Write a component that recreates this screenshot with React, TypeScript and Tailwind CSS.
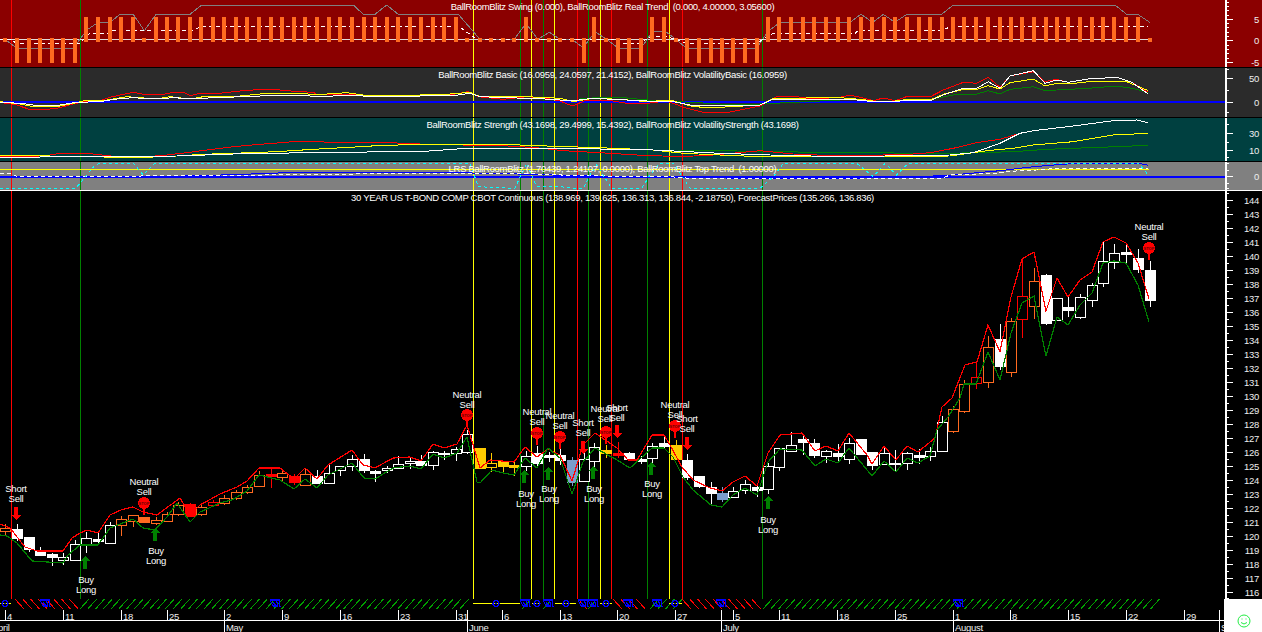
import type { ReactNode } from 'react';

// helpers: chart data was read off 3x crops, so z() takes crop coords + crop origin
const z = (ox: number, oy: number, ...v: number[]) => {
  const out: string[] = [];
  for (let i = 0; i < v.length; i += 2) out.push(`${(v[i] / 3 + ox).toFixed(1)},${(v[i + 1] / 3 + oy).toFixed(1)}`);
  return out.join(' ');
};
const join = (...parts: string[]) => parts.join(' ');

const RED = '#ff0000';
const GREEN = '#008000';
const YELLOW = '#ffff00';
const BLUE = '#0000ff';
const ORANGE = '#ff6a20';
const CYAN = '#00ffff';

const VERTICALS: [number, string][] = [
  [11, RED],
  [80, GREEN],
  [473, YELLOW],
  [520, GREEN],
  [531, YELLOW],
  [543, GREEN],
  [554, YELLOW],
  [577, RED],
  [588, GREEN],
  [600, YELLOW],
  [611, RED],
  [647, GREEN],
  [669, YELLOW],
  [682, RED],
  [762, GREEN],
];

type Candle = [number, number, number, number, number, string];

// x, wick top, body top, body bottom, wick bottom, kind
const CANDLES: Candle[] = [
  [5, 524, 528, 531, 535, 'n'],
  [17, 524, 529, 538, 541, 'W'],
  [29, 537, 537, 549, 552, 'W'],
  [40, 547, 551, 555, 556, 'W'],
  [52, 553, 554, 557, 566, 'W'],
  [63, 553, 557, 560, 565, 'o'],
  [75, 540, 544, 560, 560, 'o'],
  [86, 532, 538, 544, 553, 'o'],
  [98, 532, 539, 541, 544, 'W'],
  [110, 522, 525, 543, 543, 'o'],
  [121, 516, 519, 525, 536, 'n'],
  [133, 515, 515, 521, 527, 'n'],
  [144, 517, 517, 522, 523, 'N'],
  [156, 517, 520, 523, 525, 'n'],
  [167, 512, 514, 521, 521, 'n'],
  [178, 502, 505, 514, 516, 'n'],
  [190, 503, 504, 516, 517, 'R'],
  [201, 503, 507, 514, 516, 'n'],
  [213, 500, 502, 505, 507, 'r'],
  [224, 495, 498, 503, 505, 'n'],
  [236, 490, 492, 498, 500, 'n'],
  [247, 485, 487, 492, 494, 'n'],
  [259, 471, 475, 486, 486, 'n'],
  [271, 469, 474, 476, 488, 'R'],
  [282, 470, 473, 477, 481, 'n'],
  [294, 474, 476, 482, 485, 'R'],
  [305, 468, 474, 485, 486, 'n'],
  [317, 470, 476, 483, 483, 'W'],
  [329, 464, 473, 483, 483, 'o'],
  [340, 466, 466, 470, 476, 'o'],
  [352, 455, 459, 466, 471, 'o'],
  [364, 454, 459, 470, 473, 'W'],
  [375, 470, 471, 473, 482, 'W'],
  [387, 466, 468, 470, 473, 'o'],
  [398, 456, 464, 468, 468, 'o'],
  [410, 458, 461, 463, 469, 'o'],
  [421, 455, 461, 465, 465, 'W'],
  [433, 451, 452, 465, 470, 'o'],
  [444, 451, 453, 454, 460, 'o'],
  [456, 447, 449, 453, 461, 'o'],
  [467, 430, 434, 452, 454, 'o'],
  [480, 448, 448, 468, 468, 'Y'],
  [491, 453, 463, 467, 472, 'y'],
  [503, 461, 461, 466, 472, 'Y'],
  [514, 462, 465, 467, 476, 'Y'],
  [526, 451, 456, 466, 471, 'o'],
  [537, 446, 453, 463, 467, 'W'],
  [549, 452, 455, 457, 462, 'W'],
  [560, 449, 455, 460, 465, 'W'],
  [572, 457, 460, 482, 486, 'B'],
  [584, 451, 459, 481, 481, 'o'],
  [594, 443, 447, 461, 467, 'o'],
  [606, 445, 450, 453, 458, 'Y'],
  [618, 442, 453, 455, 458, 'R'],
  [629, 452, 453, 459, 460, 'W'],
  [641, 456, 459, 461, 464, 'W'],
  [652, 443, 446, 458, 465, 'o'],
  [664, 437, 443, 446, 448, 'W'],
  [676, 440, 445, 459, 460, 'Y'],
  [687, 454, 460, 477, 480, 'W'],
  [699, 476, 476, 486, 488, 'W'],
  [711, 482, 487, 493, 504, 'W'],
  [722, 487, 493, 499, 502, 'B'],
  [733, 487, 491, 497, 497, 'o'],
  [745, 480, 484, 490, 494, 'o'],
  [757, 483, 487, 490, 497, 'W'],
  [768, 463, 466, 489, 494, 'o'],
  [779, 448, 448, 467, 471, 'o'],
  [791, 432, 445, 451, 451, 'o'],
  [803, 435, 439, 442, 455, 'W'],
  [814, 439, 443, 455, 458, 'W'],
  [826, 450, 451, 456, 463, 'o'],
  [838, 444, 453, 456, 463, 'W'],
  [849, 438, 443, 459, 464, 'o'],
  [861, 439, 439, 454, 455, 'W'],
  [872, 452, 452, 465, 470, 'W'],
  [884, 446, 453, 464, 464, 'o'],
  [895, 450, 463, 464, 472, 'W'],
  [907, 452, 453, 463, 470, 'o'],
  [919, 449, 455, 457, 464, 'W'],
  [930, 447, 451, 456, 461, 'o'],
  [942, 416, 422, 451, 452, 'o'],
  [953, 406, 409, 431, 433, 'n'],
  [964, 380, 384, 411, 413, 'n'],
  [976, 363, 377, 383, 389, 'r'],
  [988, 336, 347, 382, 388, 'n'],
  [1000, 324, 339, 366, 370, 'W'],
  [1011, 318, 321, 372, 377, 'n'],
  [1022, 258, 296, 319, 338, 'r'],
  [1034, 268, 281, 306, 319, 'n'],
  [1046, 274, 275, 323, 325, 'W'],
  [1057, 298, 298, 320, 321, 'o'],
  [1068, 297, 307, 310, 317, 'W'],
  [1080, 294, 297, 317, 319, 'o'],
  [1092, 283, 285, 300, 307, 'o'],
  [1103, 242, 261, 283, 287, 'o'],
  [1114, 244, 253, 262, 269, 'o'],
  [1126, 245, 252, 254, 263, 'W'],
  [1138, 249, 258, 269, 273, 'W'],
  [1150, 261, 270, 300, 307, 'W'],
];

const KIND: Record<string, { color: string; filled: boolean }> = {
  W: { color: '#ffffff', filled: true },
  o: { color: '#ffffff', filled: false },
  N: { color: ORANGE, filled: true },
  n: { color: ORANGE, filled: false },
  R: { color: RED, filled: true },
  r: { color: RED, filled: false },
  Y: { color: '#ffcc00', filled: true },
  y: { color: '#ffcc00', filled: false },
  B: { color: '#7b9ccb', filled: true },
};

const redBand =
  '0,524 10,528 25,547 37,551 63,551 72,538 80,533 87,530 98,533 110,515 121,510 133,507 143,512 157,515 180,498 190,515 200,505 220,494 237,487 247,481 259,468 280,468 294,479 305,468 317,479 328,465 352,450 363,465 375,468 393,458 410,457 421,461 433,444 444,448 457,444 467,425 477,458 480,468 490,460 514,462 525,447 537,457 548,449 560,455 572,481 583,445 595,433 617,448 628,460 637,460 652,435 664,435 670,445 682,467 693,480 710,488 722,491 733,482 745,476 757,486 768,453 780,435 802,433 815,451 826,446 838,451 849,433 867,455 872,464 884,446 896,460 907,446 918,452 935,438 942,407 952,398 965,365 977,362 988,325 1000,352 1011,297 1022,259 1034,252 1046,311 1057,278 1068,297 1080,280 1092,272 1103,242 1114,237 1126,243 1138,263 1149,299';
const greenBand =
  '0,535 7,536 17,543 32,561 63,563 68,555 80,545 98,545 110,528 133,519 143,528 155,530 167,517 177,503 190,522 200,512 220,503 232,500 247,491 259,475 280,480 294,489 305,479 317,488 328,475 352,463 364,478 375,479 393,468 410,466 421,469 433,454 444,458 457,453 467,437 477,482 480,483 492,470 503,473 514,475 525,458 537,468 548,448 560,458 572,494 583,462 595,448 617,460 630,468 652,448 664,448 673,457 683,477 693,490 711,505 722,507 733,495 745,488 757,495 768,462 780,449 802,450 815,466 826,459 838,463 849,448 872,476 884,461 896,472 907,458 918,463 930,456 937,430 948,417 960,398 964,384 976,384 988,352 1000,380 1011,333 1022,303 1034,296 1046,356 1057,317 1068,325 1080,305 1092,293 1103,263 1114,261 1126,263 1138,285 1149,322';

const DOTS = [5, 144, 467, 480, 491, 503, 514, 537, 549, 560, 572, 606, 676, 1150];
const NEGATIVE = [17, 29, 40, 52, 63, 75, 584, 618, 629, 641, 687, 699, 711, 722, 733, 745, 757];

function Line({ p, c, dash, w = 1 }: { p: string; c: string; dash?: string; w?: number }) {
  return <polyline points={p} fill="none" stroke={c} strokeWidth={w} strokeDasharray={dash} />;
}

function Verticals({ y0, y1 }: { y0: number; y1: number }) {
  return (
    <>
      {VERTICALS.map(([x, c]) => (
        <line key={x} x1={x + 0.5} x2={x + 0.5} y1={y0} y2={y1} stroke={c} />
      ))}
    </>
  );
}

interface PaneProps {
  className: string;
  chartHeight: number;
  y0: number;
  title: string;
  ticks: [number, boolean][];
  labels: [string, number][];
  children: ReactNode;
}

function Pane({ className, chartHeight, y0, title, ticks, labels, children }: PaneProps) {
  return (
    <div className={`flex shrink-0 ${className}`}>
      <div className="relative w-[1225px] overflow-hidden">
        <svg
          className="absolute left-0 top-0"
          width={1225}
          height={chartHeight}
          viewBox={`0 ${y0} 1225 ${chartHeight}`}
          shapeRendering="crispEdges"
        >
          <Verticals y0={y0} y1={y0 + chartHeight} />
          {children}
        </svg>
        <div className="relative whitespace-pre pt-px text-center text-[9.5px] leading-3 tracking-[-0.31px] text-white">
          {title}
        </div>
      </div>
      <div className="relative w-[37px] overflow-hidden border-l-2 border-white">
        <svg
          className="absolute left-0 top-0"
          width={35}
          height={chartHeight}
          viewBox={`0 ${y0} 35 ${chartHeight}`}
          shapeRendering="crispEdges"
        >
          {ticks.map(([y, major]) => (
            <line key={y} x1={0} x2={major ? 6 : 2} y1={y + 0.5} y2={y + 0.5} stroke="#ffffff" />
          ))}
        </svg>
        {labels.map(([text, y]) => (
          <span
            key={text}
            className="absolute right-[3px] text-[9.5px] leading-3 tracking-[-0.3px] text-[#eeeeee]"
            style={{ top: y - y0 - 5 }}
          >
            {text}
          </span>
        ))}
      </div>
    </div>
  );
}

function SwingBars() {
  return (
    <>
      {CANDLES.map(([x]) => {
        if (DOTS.includes(x)) return <rect key={x} x={x - 2} y={38} width={4} height={4} rx={1} fill={ORANGE} />;
        if (NEGATIVE.includes(x)) return <rect key={x} x={x - 2} y={38} width={4} height={25} rx={1} fill={ORANGE} />;
        return <rect key={x} x={x - 2} y={17} width={4} height={25} rx={1} fill={ORANGE} />;
      })}
    </>
  );
}

function CandleMark({ c }: { c: Candle }) {
  const [x, wt, bt, bb, wb, kind] = c;
  const { color, filled } = KIND[kind];
  return (
    <g>
      <line x1={x + 0.5} x2={x + 0.5} y1={wt} y2={wb} stroke={color} />
      <rect
        x={x - 4.5}
        y={bt + 0.5}
        width={10}
        height={Math.max(bb - bt, 1)}
        fill={filled ? color : '#000000'}
        stroke={color}
        strokeWidth={1.2}
      />
    </g>
  );
}

function Label({ x, y, a, b }: { x: number; y: number; a: string; b: string }) {
  return (
    <g className="fill-white text-[9.5px] tracking-[-0.25px]" textAnchor="middle" shapeRendering="auto">
      <text x={x} y={y + 3.5}>
        {a}
      </text>
      <text x={x} y={y + 14}>
        {b}
      </text>
    </g>
  );
}

function ShortSell({ x, y, ay }: { x: number; y: number; ay: number }) {
  return (
    <>
      <Label x={x} y={y} a="Short" b="Sell" />
      <polygon
        points={`${x - 2},${ay} ${x + 2},${ay} ${x + 2},${ay + 8} ${x + 5},${ay + 8} ${x},${ay + 13} ${x - 5},${ay + 8} ${x - 2},${ay + 8}`}
        fill={RED}
      />
    </>
  );
}

function BuyLong({ x, y, ax, ay }: { x: number; y: number; ax: number; ay: number }) {
  return (
    <>
      <Label x={x} y={y} a="Buy" b="Long" />
      <polygon
        points={`${ax},${ay} ${ax + 5},${ay + 5} ${ax + 2},${ay + 5} ${ax + 2},${ay + 13} ${ax - 2},${ay + 13} ${ax - 2},${ay + 5} ${ax - 5},${ay + 5}`}
        fill={GREEN}
      />
    </>
  );
}

function NeutralSell({ x, y, sx, sy }: { x: number; y: number; sx: number; sy: number }) {
  return (
    <>
      <Label x={x} y={y} a="Neutral" b="Sell" />
      <rect x={sx - 1} y={sy + 4} width={2} height={8} fill={RED} />
      <circle cx={sx} cy={sy} r={6} fill={RED} />
      <text x={sx} y={sy + 1.5} textAnchor="middle" className="fill-[#660000] text-[4px] font-bold" shapeRendering="auto">
        STOP
      </text>
    </>
  );
}

const priceTicks: [number, boolean][] = [];
const priceLabels: [string, number][] = [];
for (let p = 144; p >= 116; p--) {
  const y = 200 + (144 - p) * 14;
  priceTicks.push([y, true]);
  priceTicks.push([y - 7, false]);
  priceLabels.push([String(p), y]);
}
priceTicks.push([599 - 1, false]);

const swingTicks: [number, boolean][] = [
  [2, false], [6, false], [10, false], [15, false], [19, true], [23, false], [27, false], [32, false], [36, false], [40, true],
  [45, false], [49, false], [53, false], [58, false], [62, true],
];

const DATES: [string, number][] = [
  ['4', 5], ['11', 63], ['18', 121], ['25', 167], ['2', 224], ['9', 282], ['16', 340], ['23', 398], ['31', 456],
  ['6', 502], ['13', 560], ['20', 617], ['27', 675], ['5', 733], ['11', 779], ['18', 837], ['25', 895], ['1', 953],
  ['8', 1010], ['15', 1068], ['22', 1126], ['29', 1184],
];
const MONTHS: [string, number][] = [
  ['April', -10], ['May', 224], ['June', 467], ['July', 721], ['August', 953], ['Sep', 1219],
];

function hatch(x1: number, x2: number, color: string, back: boolean) {
  const out: ReactNode[] = [];
  for (let x = x1; x < x2 - 6; x += 7.75) {
    out.push(
      <line
        key={`${color}${x}`}
        x1={x}
        x2={x + 9}
        y1={back ? 0 : 10}
        y2={back ? 10 : 0}
        stroke={color}
      />,
    );
  }
  return out;
}

function Dot({ x }: { x: number }) {
  return (
    <g>
      <circle cx={x} cy={4.5} r={3} fill="none" stroke={BLUE} strokeWidth={1.3} />
      <rect x={x - 1} y={4} width={2} height={1} fill={BLUE} />
    </g>
  );
}

function Glyph({ x }: { x: number }) {
  return (
    <path
      d={`M${x - 5} 1 H${x + 4} L${x + 5} 8 M${x - 5} 1 L${x - 2} 7 H${x + 3} M${x - 2} 3 L${x + 1} 7 M${x + 1} 1 L${x + 3} 6`}
      fill="none"
      stroke={BLUE}
      strokeWidth={1.2}
    />
  );
}

export default function App() {
  return (
    <div className="flex h-[632px] w-[1262px] flex-col overflow-hidden bg-black font-['Liberation_Sans',Arial,sans-serif]">
      {/* swing */}
      <Pane
        className="h-[68px] border-b border-black bg-[#8b0000]"
        chartHeight={67}
        y0={0}
        title="BallRoomBlitz Swing (0.000), BallRoomBlitz Real Trend  (0.000, 4.00000, 3.05600)"
        ticks={swingTicks}
        labels={[['5', 19], ['0', 40], ['-5', 62]]}
      >
        <Line p="0,39.5 1150,39.5" c="#dddddd" />
        <Line
          p={join(
            z(0, 0, 15, 118, 50, 145, 220, 145, 260, 90, 295, 67, 330, 67, 360, 43, 400, 43, 433, 92, 468, 43, 570, 43, 605, 15, 1060, 15, 1090, 43, 1125, 43, 1160, 15, 1195, 43, 1260, 43),
            z(420, 0, 115, 43, 180, 118, 283, 118, 318, 70, 353, 118, 388, 97, 420, 118, 455, 118, 490, 143, 525, 95, 560, 118, 595, 145, 663, 145, 697, 95, 737, 95, 767, 118, 800, 145, 1010, 145, 1043, 95, 1080, 67, 1260, 67),
            z(840, 0, 30, 67, 63, 43, 98, 67, 130, 43, 165, 67, 200, 43, 305, 43, 340, 15, 825, 15, 860, 43, 893, 43, 929, 67),
          )}
          c="#808080"
        />
        <Line
          p={join(
            z(0, 0, 0, 118, 30, 118, 50, 130, 240, 130, 270, 100, 330, 100, 335, 92, 580, 92, 600, 80, 1260, 78),
            z(420, 0, 115, 78, 170, 118, 580, 118, 590, 130, 660, 130, 695, 108, 735, 108, 765, 118, 800, 130, 1010, 130, 1060, 100, 1260, 100),
            z(840, 0, 45, 100, 55, 92, 305, 92, 335, 78, 925, 78),
          )}
          c="#ffffff"
          dash="4 3"
        />
        <SwingBars />
      </Pane>

      {/* basic */}
      <Pane
        className="h-[50px] border-b border-black bg-[#2b2b2b]"
        chartHeight={49}
        y0={68}
        title="BallRoomBlitz Basic (16.0959, 24.0597, 21.4152), BallRoomBlitz VolatilityBasic (16.0959)"
        ticks={[[69, false], [78, true], [90, false], [102, true], [112, false]]}
        labels={[['50', 78], ['0', 102]]}
      >
        <Line p="0,102 1225,102" c={BLUE} w={2} />
        <Line
          p={join(
            z(420, 0, 480, 295, 600, 292, 680, 300, 780, 305, 900, 312, 1020, 312),
            z(840, 0, 0, 300, 30, 295, 100, 305, 165, 303, 205, 298, 275, 298, 340, 285, 370, 282, 410, 282, 445, 272, 480, 282, 510, 268, 580, 260, 615, 272, 650, 270, 745, 265, 830, 258, 875, 265, 925, 277),
          )}
          c={GREEN}
        />
        <Line
          p={join(
            z(0, 0, 0, 307, 50, 315, 85, 327, 120, 330, 170, 325, 220, 312, 250, 305, 290, 305, 330, 292, 370, 283, 400, 277, 430, 283, 490, 283, 520, 277, 550, 277, 570, 287, 600, 280, 660, 280, 710, 274, 760, 270, 810, 267, 860, 272, 900, 275, 940, 277, 950, 283, 1000, 285, 1060, 282, 1100, 287, 1260, 287),
            z(420, 0, 100, 283, 145, 275, 175, 290, 250, 298, 320, 290, 380, 295, 420, 303, 457, 318, 500, 300, 560, 300, 620, 310, 665, 312, 740, 303, 800, 325, 850, 337, 920, 338, 1020, 318, 1070, 290, 1130, 290, 1180, 297, 1260, 292),
            z(840, 0, 30, 285, 60, 292, 100, 302, 130, 294, 165, 302, 205, 288, 275, 288, 310, 270, 370, 247, 410, 250, 445, 232, 480, 262, 510, 228, 580, 215, 615, 245, 650, 238, 685, 247, 745, 237, 830, 232, 875, 247, 925, 277),
          )}
          c={RED}
        />
        <Line
          p={join(
            z(0, 0, 0, 305, 60, 312, 100, 320, 170, 320, 220, 310, 250, 303, 320, 300, 380, 290, 420, 293, 470, 297, 510, 290, 570, 297, 610, 290, 700, 290, 780, 282, 900, 280, 950, 284, 1040, 278, 1090, 285, 1260, 285),
            z(420, 0, 80, 283, 150, 277, 180, 290, 320, 290, 420, 295, 460, 305, 520, 295, 600, 298, 680, 305, 750, 300, 820, 320, 880, 323, 1020, 315, 1060, 295, 1260, 293),
            z(840, 0, 60, 298, 100, 303, 165, 303, 205, 298, 275, 298, 310, 283, 370, 268, 410, 268, 445, 257, 480, 267, 510, 248, 580, 237, 615, 258, 650, 250, 685, 252, 745, 245, 860, 245, 925, 272),
          )}
          c={YELLOW}
        />
        <Line
          p={join(
            z(0, 0, 0, 307, 60, 310, 100, 315, 180, 315, 230, 307, 300, 305, 350, 297, 400, 293, 460, 297, 520, 293, 570, 296, 680, 292, 780, 288, 900, 287, 930, 288, 1000, 288, 1060, 285, 1090, 288, 1260, 288),
            z(420, 0, 100, 287, 150, 280, 180, 290, 400, 298, 450, 303, 520, 295, 680, 303, 750, 303, 810, 315, 1020, 315, 1060, 297, 1260, 297),
            z(840, 0, 30, 298, 80, 303, 165, 305, 205, 300, 275, 300, 310, 285, 370, 265, 410, 265, 445, 245, 480, 265, 510, 228, 580, 212, 615, 250, 650, 240, 685, 247, 745, 237, 830, 232, 875, 247, 925, 282),
          )}
          c="#ffffff"
        />
      </Pane>

      {/* strength */}
      <Pane
        className="h-[44px] border-b border-black bg-[#004040]"
        chartHeight={43}
        y0={118}
        title="BallRoomBlitz Strength (43.1698, 29.4999, 15.4392), BallRoomBlitz VolatilityStrength (43.1698)"
        ticks={[[124, false], [133, true], [142, false], [150, true], [157, false]]}
        labels={[['30', 133], ['10', 150]]}
      >
        <Line p={join(z(420, 0, 770, 450, 1260, 458), z(840, 0, 0, 458, 130, 458, 260, 462, 400, 458, 520, 455, 620, 448, 830, 440, 925, 436))} c={GREEN} />
        <Line
          p={join(
            z(0, 0, 0, 470, 95, 470, 150, 465, 180, 460, 280, 462, 350, 470, 440, 470, 500, 465, 560, 458, 620, 450, 700, 440, 780, 433, 880, 425, 1170, 428, 1260, 432),
            z(420, 0, 100, 433, 160, 437, 250, 437, 350, 443, 430, 452, 540, 458, 650, 465, 780, 470, 880, 465, 1020, 452, 1120, 462, 1260, 468),
            z(840, 0, 130, 465, 220, 462, 270, 458, 340, 445, 410, 428, 480, 418, 540, 400, 580, 392, 700, 378, 820, 362, 890, 360, 925, 368),
          )}
          c={RED}
        />
        <Line
          p={join(
            z(0, 0, 0, 465, 95, 466, 150, 468, 180, 470, 440, 472, 530, 468, 610, 463, 700, 460, 830, 455, 940, 448, 1050, 442, 1130, 437, 1260, 433),
            z(420, 0, 250, 433, 350, 437, 540, 443, 700, 450, 790, 460, 900, 465, 1020, 470, 1260, 470),
            z(840, 0, 330, 468, 440, 452, 520, 445, 580, 435, 700, 425, 820, 405, 925, 400),
          )}
          c={YELLOW}
        />
        <Line
          p={join(
            z(0, 0, 0, 472, 530, 468, 700, 462, 830, 460, 950, 457, 1260, 455),
            z(420, 0, 140, 445, 540, 447, 700, 450, 900, 460, 1050, 465, 1260, 470),
            z(840, 0, 330, 465, 400, 458, 480, 430, 540, 400, 580, 392, 700, 378, 820, 362, 890, 360, 925, 368),
          )}
          c="#ffffff"
        />
      </Pane>

      {/* top trend */}
      <Pane
        className="h-[29px] border-b border-white bg-[#808080]"
        chartHeight={28}
        y0={162}
        title="LRS BallRoomBlitz (1.70439, 1.24107, 0.0000), BallRoomBlitz Top Trend  (1.00000)"
        ticks={[[163, false], [170, false], [176, true], [183, false], [188, false]]}
        labels={[['0', 176]]}
      >
        <Line p="0,169.5 1149,169.5" c={YELLOW} />
        <Line p="0,176.5 1225,176.5" c={BLUE} w={2} />
        <Line
          p={join(
            z(0, 0, 0, 528, 165, 528, 165, 533, 240, 533, 600, 527, 730, 523, 810, 520, 890, 517, 1260, 517),
            z(420, 0, 220, 520, 470, 527, 800, 533, 1030, 535),
            z(840, 0, 0, 536, 310, 527, 370, 522, 480, 512, 580, 500, 680, 492, 895, 490, 925, 496),
          )}
          c={BLUE}
        />
        <Line
          p={join(
            z(0, 0, 0, 520, 30, 520, 50, 529, 260, 529, 600, 527, 1260, 520),
            z(420, 0, 300, 520, 475, 527, 750, 530, 810, 535, 1030, 537),
            z(840, 0, 305, 535, 330, 525, 470, 520, 510, 514, 590, 510, 640, 506, 925, 506),
          )}
          c="#ffffff"
          dash="4 3"
        />
        <Line
          p={join(
            z(0, 0, 0, 565, 225, 565, 240, 550, 285, 495, 300, 490, 400, 490, 430, 525, 465, 490, 1260, 490),
            z(420, 0, 150, 490, 175, 560, 285, 565, 305, 520, 320, 490, 335, 525, 350, 560, 420, 560, 460, 565, 490, 565, 510, 525, 530, 495, 575, 565, 665, 565, 690, 525, 720, 490, 760, 490, 810, 565, 1020, 565, 1060, 530, 1090, 490, 1260, 490),
            z(840, 0, 50, 490, 100, 530, 135, 490, 170, 525, 205, 490, 895, 490, 925, 525),
          )}
          c={CYAN}
          dash="3 3"
        />
      </Pane>

      {/* price */}
      <Pane
        className="h-[408px]"
        chartHeight={408}
        y0={191}
        title="30 YEAR US T-BOND COMP CBOT Continuous (138.969, 139.625, 136.313, 136.844, -2.18750), ForecastPrices (135.266, 136.836)"
        ticks={priceTicks}
        labels={priceLabels}
      >
        {CANDLES.map((c) => (
          <CandleMark key={c[0]} c={c} />
        ))}
        <Line p={redBand} c={RED} w={1.2} />
        <Line p={greenBand} c={GREEN} w={1.2} />

        <ShortSell x={16} y={488} ay={507} />
        <NeutralSell x={144} y={481} sx={144} sy={503} />
        <BuyLong x={86} y={579} ax={85} ay={556} />
        <BuyLong x={156} y={550} ax={155} ay={528} />
        <NeutralSell x={467} y={394} sx={467} sy={415} />
        <NeutralSell x={537} y={411} sx={537} sy={433} />
        <NeutralSell x={560} y={415} sx={560} sy={437} />
        <ShortSell x={583} y={422} ay={441} />
        <NeutralSell x={605} y={408} sx={606} sy={432} />
        <ShortSell x={617} y={407} ay={425} />
        <NeutralSell x={675} y={404} sx={675} sy={426} />
        <ShortSell x={687} y={418} ay={437} />
        <BuyLong x={526} y={493} ax={524} ay={470} />
        <BuyLong x={549} y={488} ax={548} ay={467} />
        <BuyLong x={594} y={488} ax={593} ay={466} />
        <BuyLong x={652} y={483} ax={651} ay={462} />
        <BuyLong x={768} y={519} ax={768} ay={496} />
        <NeutralSell x={1149} y={226} sx={1149} sy={248} />
      </Pane>

      {/* strip + time axis */}
      <div className="flex h-[33px] shrink-0">
        <div className="relative h-full w-[1224px] overflow-hidden">
          <svg className="block" width={1224} height={11} viewBox="0 0 1224 11" shapeRendering="crispEdges">
            {hatch(15, 80, RED, true)}
            {hatch(80, 473, '#00a000', false)}
            {hatch(522, 532, '#00a000', false)}
            {hatch(543, 554, '#00a000', false)}
            {hatch(578, 590, RED, true)}
            {hatch(588, 600, '#00a000', false)}
            {hatch(613, 650, RED, true)}
            {hatch(650, 680, '#00a000', false)}
            {hatch(682, 762, RED, true)}
            {hatch(763, 1161, '#00a000', false)}
            <Line p="0,4.5 11,4.5" c={YELLOW} />
            <Line p="473,4.5 520,4.5" c={YELLOW} />
            <Line p="532,4.5 541,4.5" c={YELLOW} />
            <Line p="555,4.5 576,4.5" c={YELLOW} />
            <Line p="600,4.5 612,4.5" c={YELLOW} />
            <Line p="669,4.5 682,4.5" c={YELLOW} />
            {[5, 496, 537, 566, 606, 675].map((x) => (
              <Dot key={x} x={x} />
            ))}
            {[45, 275, 525, 548, 583, 593, 628, 657, 721, 958].map((x) => (
              <Glyph key={x} x={x} />
            ))}
          </svg>

          <div className="relative h-[11px] border-b border-white">
            {DATES.map(([d, x]) => (
              <div key={`${d}${x}`}>
                <div className="absolute top-0 h-full w-px bg-white" style={{ left: x }} />
                <span className="absolute top-px text-[9.5px] leading-3 tracking-[-0.3px] text-[#eeeeee]" style={{ left: x + 2 }}>
                  {d}
                </span>
              </div>
            ))}
          </div>

          <div className="relative h-[11px]">
            {MONTHS.map(([m, x]) => (
              <div key={m}>
                <div className="absolute top-[-11px] h-[22px] w-px bg-white" style={{ left: x }} />
                <span className="absolute top-px text-[9.5px] leading-3 tracking-[-0.3px] text-[#eeeeee]" style={{ left: x + 2 }}>
                  {m}
                </span>
              </div>
            ))}
          </div>
        </div>

        <div className="flex flex-1 items-end justify-center bg-white pb-[4px] pl-px">
          <svg width={14} height={14} viewBox="0 0 14 14" fill="none" stroke="#22ee44">
            <circle cx={7} cy={7} r={6} />
            <rect x={4.5} y={4.5} width={1} height={1} fill="#22ee44" stroke="none" />
            <rect x={8.5} y={4.5} width={1} height={1} fill="#22ee44" stroke="none" />
            <path d="M4 8.5 Q7 11.5 10 8.5" />
          </svg>
        </div>
      </div>
    </div>
  );
}
